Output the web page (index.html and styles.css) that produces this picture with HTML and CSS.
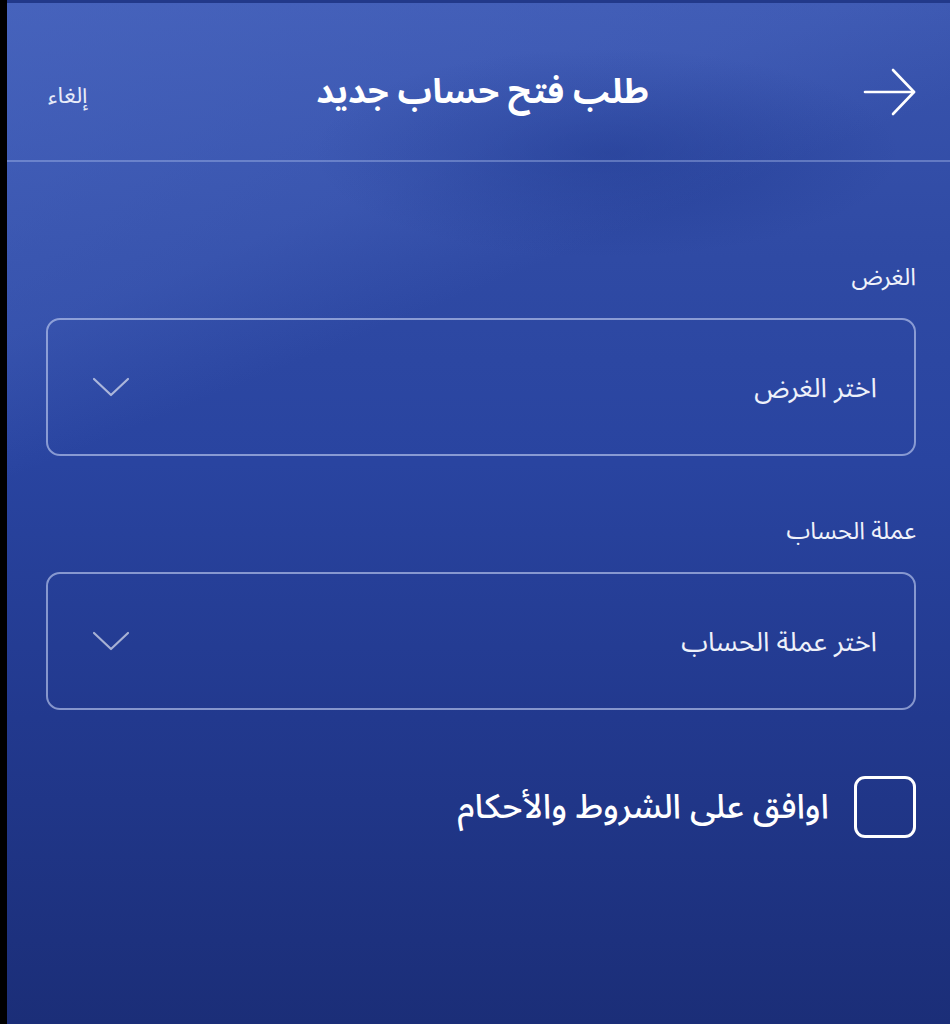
FILE: index.html
```html
<!DOCTYPE html>
<html lang="ar" dir="rtl">
<head>
<meta charset="utf-8">
<title>طلب فتح حساب جديد</title>
<link rel="stylesheet" href="styles.css">
</head>
<body>
<div class="frame">
  <main class="screen">
    <header class="topbar">
      <button class="back" aria-label="رجوع">
        <svg width="54" height="48" viewBox="0 0 54 48" fill="none" stroke="#ffffff" stroke-width="2.6" stroke-linecap="round" stroke-linejoin="round">
          <path d="M2 24 H51"/>
          <path d="M30 2 L51 24 L30 46"/>
        </svg>
      </button>
      <h1 class="title">طلب فتح حساب جديد</h1>
      <a class="cancel" href="#">إلغاء</a>
    </header>

    <section class="form">
      <div class="field">
        <label class="label">الغرض</label>
        <div class="select">
          <span class="placeholder">اختر الغرض</span>
          <svg class="chev" width="40" height="22" viewBox="0 0 40 22" fill="none" stroke="rgba(255,255,255,0.6)" stroke-width="2.2" stroke-linecap="round" stroke-linejoin="round">
            <path d="M3 3 L20 19 L37 3"/>
          </svg>
        </div>
      </div>

      <div class="field">
        <label class="label">عملة الحساب</label>
        <div class="select">
          <span class="placeholder">اختر عملة الحساب</span>
          <svg class="chev" width="40" height="22" viewBox="0 0 40 22" fill="none" stroke="rgba(255,255,255,0.6)" stroke-width="2.2" stroke-linecap="round" stroke-linejoin="round">
            <path d="M3 3 L20 19 L37 3"/>
          </svg>
        </div>
      </div>

      <div class="agree">
        <span class="box"></span>
        <span class="agree-text">اوافق على الشروط والأحكام</span>
      </div>
    </section>
  </main>
</div>
</body>
</html>
```

FILE: styles.css
```css
html, body {
  margin: 0;
  padding: 0;
  height: 100%;
}

body {
  background: #000000;
  font-family: "Noto Sans Arabic", "Noto Naskh Arabic", "DejaVu Sans", sans-serif;
  color: #ffffff;
}

.frame {
  display: flex;
  flex-direction: row;
  height: 1024px;
  overflow: hidden;
}

.screen {
  flex: 0 0 943px;
  height: 1024px;
  box-sizing: border-box;
  border-top: 3px solid #22398a;
  background-color: #2a45a0;
  background-image:
    radial-gradient(ellipse 420px 150px at 600px 150px, rgba(20, 45, 130, 0.35), rgba(20, 45, 130, 0) 70%),
    linear-gradient(158deg, rgba(80, 110, 200, 0.55) 0%, rgba(80, 110, 200, 0.28) 24%, rgba(80, 110, 200, 0) 34%),
    linear-gradient(180deg, #3a55ae 0%, #2f4aa4 25%, #2944a0 45%, #22398e 70%, #1b2e78 100%);
  display: flex;
  flex-direction: column;
}

.topbar {
  display: grid;
  grid-template-columns: 1fr auto 1fr;
  align-items: center;
  height: 159px;
  box-sizing: border-box;
  padding: 20px 33px 0 41px;
  border-bottom: 2px solid rgba(190, 205, 245, 0.35);
}

.back {
  justify-self: start;
  background: none;
  border: 0;
  padding: 0;
  margin: 0;
  display: flex;
  align-items: center;
  cursor: pointer;
}

.title {
  margin: 0;
  font-size: 34px;
  font-weight: 700;
  line-height: 1;
  color: #ffffff;
}

.cancel {
  justify-self: end;
  font-size: 23px;
  color: #e8ecf8;
  text-decoration: none;
  margin-top: 8px;
}

.form {
  display: flex;
  flex-direction: column;
  padding: 102px 34px 0 39px;
}

.field {
  display: flex;
  flex-direction: column;
  gap: 26px;
  margin-bottom: 62px;
}

.label {
  font-size: 24px;
  line-height: 28px;
  color: #f0f2fa;
}

.select {
  height: 138px;
  box-sizing: border-box;
  border: 2px solid rgba(200, 212, 245, 0.6);
  border-radius: 14px;
  display: flex;
  align-items: center;
  justify-content: space-between;
  padding: 0 37px 0 43px;
}

.placeholder {
  font-size: 27px;
  color: #eef1fa;
  margin-top: 2px;
}

.chev {
  display: block;
}

.agree {
  display: flex;
  align-items: center;
  gap: 25px;
  margin-top: -1px;
}

.box {
  width: 62px;
  height: 62px;
  box-sizing: border-box;
  border: 3px solid #ffffff;
  border-radius: 11px;
  flex: 0 0 auto;
}

.agree-text {
  font-size: 34px;
  font-weight: 500;
  color: #ffffff;
}
```
